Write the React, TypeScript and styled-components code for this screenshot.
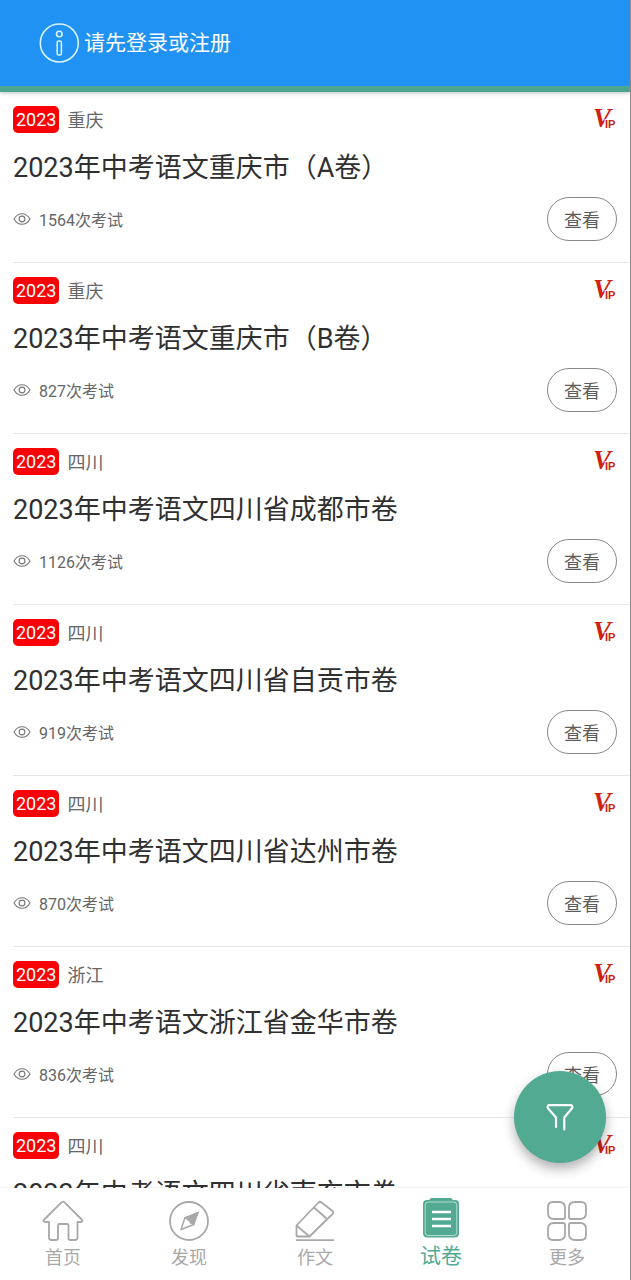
import React from 'react';
import styled, { createGlobalStyle } from 'styled-components';

const GlobalStyle = createGlobalStyle`
  * { box-sizing: border-box; }
  body {
    margin: 0;
    background: #fff;
    font-family: Roboto, "Noto Sans CJK SC", sans-serif;
    font-weight: 400;
  }
  button { font: inherit; cursor: pointer; }
`;

const Screen = styled.div`
  position: relative;
  display: flex;
  flex-direction: column;
  height: 100vh;
  border-right: 1px solid #8c8c8c;
  overflow: hidden;
`;

const Header = styled.header`
  position: relative;
  z-index: 1;
  flex: none;
  display: flex;
  align-items: center;
  height: 92px;
  padding: 0 39px;
  background: #1f92f3;
  border-bottom: 6px solid #4ba591;
  box-shadow: 0 1px 4px rgba(0, 0, 0, 0.25);
`;

const LoginLink = styled.a`
  display: flex;
  align-items: center;
  gap: 4px;
  color: #fff;
  font-size: 21px;
  line-height: 42px;
  text-decoration: none;
`;

const PaperList = styled.ul`
  flex: 1;
  min-height: 0;
  margin: 0;
  padding: 0 0 0 13px;
  list-style: none;
  overflow-y: auto;
  scrollbar-width: none;
`;

const PaperItem = styled.li`
  padding: 14px 13px 21px 0;
  border-bottom: 1px solid #e6e6e6;
`;

const Row = styled.div`
  display: flex;
  align-items: center;
  justify-content: space-between;
`;

const Tags = styled.div`
  display: flex;
  align-items: center;
  gap: 8px;
  height: 26px;
  color: #666;
  font-size: 18px;
`;

const Year = styled.span`
  padding: 0 3px;
  border-radius: 5px;
  background: #f80206;
  color: #fff;
  line-height: 27px;
`;

const Title = styled.h2`
  margin: 16px 0 9px;
  color: #303030;
  font-size: 27px;
  font-weight: 400;
  line-height: 40px;
  white-space: nowrap;
`;

const Views = styled.span`
  display: flex;
  align-items: center;
  gap: 8px;
  color: #666;
  font-size: 16px;
`;

const ViewButton = styled.button`
  width: 70px;
  height: 44px;
  padding: 0;
  border: 1px solid #888;
  border-radius: 22px;
  background: #fff;
  color: #5c5c5c;
  font-size: 18px;
`;

const FilterButton = styled.button`
  position: absolute;
  right: 24px;
  bottom: 117px;
  z-index: 2;
  display: grid;
  place-items: center;
  width: 92px;
  height: 92px;
  padding: 0;
  border: 0;
  border-radius: 50%;
  background: #51aa91;
  box-shadow: 0 6px 12px rgba(0, 0, 0, 0.3);
`;

const TabBar = styled.nav`
  z-index: 1;
  flex: none;
  display: flex;
  height: 92px;
  background: #fff;
  box-shadow: 0 0 3px rgba(0, 0, 0, 0.12);
`;

const Tab = styled.a<{ $active?: boolean }>`
  flex: 1;
  display: flex;
  flex-direction: column;
  align-items: center;
  padding-top: ${(p) => (p.$active ? 9 : 12)}px;
  color: ${(p) => (p.$active ? '#51aa91' : '#a8a8a8')};
  font-size: ${(p) => (p.$active ? 21 : 18)}px;
  line-height: ${(p) => (p.$active ? 34 : 32)}px;
  text-decoration: none;
`;

const VipMark = styled.svg`
  overflow: visible;
`;

const InfoIcon = () => (
  <svg width="41" height="41" viewBox="0 0 41 41" fill="none" stroke="#d6f3ff" strokeWidth="1.6" aria-hidden="true">
    <circle cx="20.3" cy="20" r="19" />
    <circle cx="20.3" cy="11" r="2.8" />
    <rect x="18.2" y="18" width="4.2" height="14" rx="1.4" />
  </svg>
);

const EyeIcon = () => (
  <svg width="18" height="14" viewBox="0 0 18 14" fill="none" stroke="#777" strokeWidth="1.1" aria-hidden="true">
    <path d="M1 7C3 3.5 5.8 1.7 9 1.7S15 3.5 17 7C15 10.5 12.2 12.3 9 12.3S3 10.5 1 7Z" />
    <circle cx="9" cy="7" r="2.9" />
  </svg>
);

const VipIcon = () => (
  <VipMark width="22" height="22" viewBox="0 0 22 22" fill="#d0210f" role="img" aria-label="VIP">
    <text x="-2" y="19" fontFamily="Liberation Serif, serif" fontSize="27" fontWeight="700" fontStyle="italic">V</text>
    <text x="10" y="20" fontFamily="Liberation Sans, sans-serif" fontSize="11" fontWeight="700" stroke="#fff" strokeWidth="2" paintOrder="stroke">IP</text>
  </VipMark>
);

const FilterIcon = () => (
  <svg width="28" height="28" viewBox="0 0 28 28" fill="none" stroke="#fff" strokeWidth="2.2" strokeLinecap="round" strokeLinejoin="round" aria-hidden="true">
    <path d="M10 24V14.5L2.2 5.5C1 4 1.5 2.2 3.5 2.2H24.5C26.5 2.2 27 4 25.8 5.5L18.3 14.5V26.5" />
  </svg>
);

const tabIcon = { width: 42, height: 42, viewBox: '0 0 42 42', fill: 'none', stroke: 'currentColor', strokeWidth: 1.8, strokeLinejoin: 'round' as const, 'aria-hidden': true };

const HomeIcon = () => (
  <svg {...tabIcon}>
    <path d="M19.7 2.2Q21 1 22.3 2.2L39.7 19.5Q41.5 22 38.5 22H35.5V37.5Q35.5 40 33 40H28.5Q26.5 40 26.5 38V25.5Q26.5 24 25 24H17.5Q16 24 16 25.5V38Q16 40 14 40H9.5Q7 40 7 37.5V22H3.5Q.5 22 2.3 19.5Z" />
  </svg>
);

const CompassIcon = () => (
  <svg {...tabIcon}>
    <circle cx="21" cy="21" r="19" />
    <path d="M30.5 12L26 24.5L22 23L22 20L19 19L17 17.5Z" fill="currentColor" strokeWidth="1" />
    <path d="M17 17.5L26 24.5L13 29.5Z" strokeWidth="1.5" />
  </svg>
);

const PencilIcon = () => (
  <svg {...tabIcon}>
    <path d="M2.5 25.5L24.5 2.5Q26 1 27.5 2.5L38.5 11Q40 12.5 38.5 14L15.5 36.5H3.5Q2.5 36.5 2.5 35.5Z" />
    <path d="M2.5 25.5L15.5 36.5M20 7.5L33 19" />
    <path d="M2 40.2H40" />
  </svg>
);

const PaperIcon = () => (
  <svg {...tabIcon} stroke="none">
    <path d="M11 1H31L33 3H35Q39 3 39 7V36Q39 40.5 34.5 40.5H7.5Q3 40.5 3 36V7Q3 3 7 3H9Z" fill="currentColor" />
    <rect x="5.2" y="5" width="31.6" height="33.5" rx="3" stroke="#fff" strokeWidth=".8" opacity=".75" />
    <path d="M12 15H31M12 22H31M12 29H31" stroke="#fff" strokeWidth="2.5" />
  </svg>
);

const MoreIcon = () => (
  <svg {...tabIcon}>
    <path d="M7 2H13Q19 2 19 8V17Q19 19 17 19H8Q2 19 2 13V7Q2 2 7 2Z" />
    <path d="M35 2H29Q23 2 23 8V17Q23 19 25 19H34Q40 19 40 13V7Q40 2 35 2Z" />
    <path d="M7 40H13Q19 40 19 34V25Q19 23 17 23H8Q2 23 2 29V35Q2 40 7 40Z" />
    <path d="M35 40H29Q23 40 23 34V25Q23 23 25 23H34Q40 23 40 29V35Q40 40 35 40Z" />
  </svg>
);

const papers = [
  { region: '重庆', title: '2023年中考语文重庆市（A卷）', views: 1564 },
  { region: '重庆', title: '2023年中考语文重庆市（B卷）', views: 827 },
  { region: '四川', title: '2023年中考语文四川省成都市卷', views: 1126 },
  { region: '四川', title: '2023年中考语文四川省自贡市卷', views: 919 },
  { region: '四川', title: '2023年中考语文四川省达州市卷', views: 870 },
  { region: '浙江', title: '2023年中考语文浙江省金华市卷', views: 836 },
  { region: '四川', title: '2023年中考语文四川省南充市卷', views: 812 },
];

const tabs = [
  { label: '首页', Icon: HomeIcon },
  { label: '发现', Icon: CompassIcon },
  { label: '作文', Icon: PencilIcon },
  { label: '试卷', Icon: PaperIcon, active: true },
  { label: '更多', Icon: MoreIcon },
];

export default function App() {
  return (
    <>
      <GlobalStyle />
      <Screen lang="zh-CN">
        <Header>
          <LoginLink href="#login">
            <InfoIcon />
            请先登录或注册
          </LoginLink>
        </Header>
        <PaperList>
          {papers.map((p) => (
            <PaperItem key={p.title}>
              <Row>
                <Tags>
                  <Year>2023</Year>
                  {p.region}
                </Tags>
                <VipIcon />
              </Row>
              <Title>{p.title}</Title>
              <Row>
                <Views>
                  <EyeIcon />
                  {p.views}次考试
                </Views>
                <ViewButton type="button">查看</ViewButton>
              </Row>
            </PaperItem>
          ))}
        </PaperList>
        <FilterButton type="button" aria-label="筛选">
          <FilterIcon />
        </FilterButton>
        <TabBar>
          {tabs.map(({ label, Icon, active }) => (
            <Tab key={label} href={`#${label}`} $active={active} aria-current={active ? 'page' : undefined}>
              <Icon />
              {label}
            </Tab>
          ))}
        </TabBar>
      </Screen>
    </>
  );
}
